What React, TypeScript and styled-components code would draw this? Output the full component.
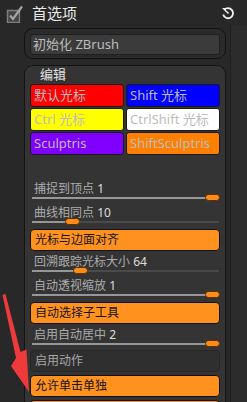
import React from 'react';
import styled, { createGlobalStyle } from 'styled-components';

const GlobalStyle = createGlobalStyle`
  html, body {
    margin: 0;
    padding: 0;
    background: #282828;
    overflow: hidden;
  }
  body {
    font-family: "Noto Sans", "Noto Sans CJK SC", sans-serif;
  }
`;

const ORANGE = '#ff911f';

type Swatch = { label: string; bg: string };

const swatches: Swatch[] = [
  { label: '默认光标', bg: '#ff0000' },
  { label: 'Shift 光标', bg: '#0000ff' },
  { label: 'Ctrl 光标', bg: '#ffff00' },
  { label: 'CtrlShift 光标', bg: '#ffffff' },
  { label: 'Sculptris', bg: '#8000ff' },
  { label: 'ShiftSculptris', bg: '#ff8000' },
];

const Page = styled.div`
  position: relative;
  width: 247px;
  height: 402px;
  overflow: hidden;
`;

const Header = styled.div`
  display: flex;
  align-items: center;
  height: 26px;
  padding-left: 5px;
  padding-right: 12px;
`;

const Title = styled.span`
  margin-left: 7px;
  font-size: 15px;
  line-height: 20px;
  color: #e8e8e8;
  flex: 1;
`;

const Body = styled.div`
  display: flex;
  height: 376px;
`;

const Main = styled.div`
  width: 202px;
  padding-left: 24px;
  padding-right: 4px;
  display: flex;
  flex-direction: column;
`;

const Strip = styled.div`
  flex: 1;
  border-left: 1px solid #1f1f1f;
  background: #2c2c2c;
`;

const InitBox = styled.div`
  margin-top: 2px;
  height: 19px;
  padding: 5px 5px;
  border: 1.5px solid #121212;
  border-radius: 9px;
  background: #2b2b2b;
`;

const Field = styled.div`
  height: 19px;
  border: 1px solid #1e1e1e;
  border-radius: 3px;
  background: #3b3b3b;
  color: #bcbcbc;
  font-size: 13px;
  line-height: 19px;
  padding-left: 2px;
`;

const Panel = styled.div`
  margin-top: 6px;
  flex: 1;
  border: 1.5px solid #141414;
  border-bottom: none;
  border-radius: 9px 9px 0 0;
  background: #343434;
  padding: 0 5px;
`;

const PanelTitle = styled.div`
  font-size: 13px;
  line-height: 17px;
  height: 18px;
  color: #e2e2e2;
  padding-left: 10px;
`;

const SwatchGrid = styled.div`
  display: grid;
  grid-template-columns: 1fr 1fr;
  gap: 1px 2px;
`;

const SwatchButton = styled.div<{ $bg: string }>`
  height: 21px;
  border: 1px solid #1a1a1a;
  border-radius: 3px;
  background: ${(p) => p.$bg};
  color: #bdbdbd;
  font-size: 13px;
  line-height: 21px;
  padding-left: 3px;
  white-space: nowrap;
  overflow: hidden;
`;

const Spacer = styled.div<{ $h: number }>`
  height: ${(p) => p.$h}px;
  flex-shrink: 0;
`;

const SliderRow = styled.div`
  position: relative;
  height: 24px;
  flex-shrink: 0;
`;

const SliderLabel = styled.div`
  padding-left: 4px;
  padding-top: 4px;
  font-size: 12px;
  line-height: 14px;
  color: #acacac;
`;

const Value = styled.span`
  color: #dedede;
`;

const Track = styled.div`
  position: absolute;
  left: 2px;
  right: 1px;
  top: 19px;
  height: 2px;
  background: #4a4a4a;
`;

const TrackFill = styled.div`
  height: 100%;
  background: #979797;
`;

const Thumb = styled.div`
  position: absolute;
  top: -3px;
  width: 13px;
  height: 5px;
  border: 1px solid #5a3100;
  border-radius: 4px;
  background: #ff8c1a;
`;

const Button = styled.div<{ $on?: boolean; $gap?: number }>`
  flex-shrink: 0;
  margin-top: ${(p) => p.$gap ?? 3}px;
  height: 20px;
  border: 1px solid ${(p) => (p.$on ? '#111' : '#272727')};
  border-radius: 4px;
  background: ${(p) => (p.$on ? ORANGE : '#2f2f2f')};
  color: ${(p) => (p.$on ? '#141414' : '#a8a8a8')};
  font-size: 12px;
  line-height: 20px;
  padding-left: 4px;
`;

const Overlay = styled.svg`
  position: absolute;
  left: 0;
  top: 0;
  pointer-events: none;
`;

const CheckIcon = () => (
  <svg width="20" height="20" viewBox="0 0 20 20">
    <rect x="4" y="9" width="12" height="12" fill="#141414" opacity="0.8" />
    <rect x="2.5" y="7.5" width="12" height="12" fill="#444" stroke="#7e7e7e" strokeWidth="1.5" />
    <path d="M5 12.5 L8 16 L17 3.5" fill="none" stroke="#a4a4a4" strokeWidth="2.2" />
  </svg>
);

const ResetIcon = () => (
  <svg width="14" height="14" viewBox="0 0 14 14">
    <path d="M3.2 4 A5 5 0 1 1 2.2 8.5" fill="none" stroke="#f0f0f0" strokeWidth="1.8" />
    <path d="M1 2 L5 2 L5 6 Z" fill="#f0f0f0" />
    <path d="M5 5 L7.5 7.5" stroke="#f0f0f0" strokeWidth="1.6" />
  </svg>
);

const Slider = ({ label, value, pos }: { label: string; value: string; pos: number }) => (
  <SliderRow>
    <SliderLabel>
      {label} <Value>{value}</Value>
    </SliderLabel>
    <Track>
      <TrackFill style={{ width: `calc(${pos * 100}% - ${pos * 14}px + 2px)` }} />
      <Thumb style={{ left: `calc(${pos * 100}% - ${pos * 14}px)` }} />
    </Track>
  </SliderRow>
);

export default function App() {
  return (
    <>
      <GlobalStyle />
      <Page>
        <Header>
          <CheckIcon />
          <Title>首选项</Title>
          <ResetIcon />
        </Header>
        <Body>
          <Main>
            <InitBox>
              <Field>初始化 ZBrush</Field>
            </InitBox>
            <Panel>
              <PanelTitle>编辑</PanelTitle>
              <SwatchGrid>
                {swatches.map((s) => (
                  <SwatchButton key={s.label} $bg={s.bg}>
                    {s.label}
                  </SwatchButton>
                ))}
              </SwatchGrid>
              <Spacer $h={23} />
              <Slider label="捕捉到顶点" value="1" pos={1} />
              <Slider label="曲线相同点" value="10" pos={0.19} />
              <Button $on>光标与边面对齐</Button>
              <Slider label="回溯跟踪光标大小" value="64" pos={0.235} />
              <Slider label="自动透视缩放" value="1" pos={1} />
              <Button $on>自动选择子工具</Button>
              <Slider label="启用自动居中" value="2" pos={1} />
              <Button $gap={2}>启用动作</Button>
              <Button $on>允许单击单独</Button>
              <Button $on />
            </Panel>
          </Main>
          <Strip />
        </Body>
        <Overlay width="247" height="402" viewBox="0 0 247 402">
          <polygon
            points="2.5,295 5.5,294 20.5,352 26.5,349.5 29,392 11,366 16,358"
            fill="#ee3a3a"
          />
        </Overlay>
      </Page>
    </>
  );
}
